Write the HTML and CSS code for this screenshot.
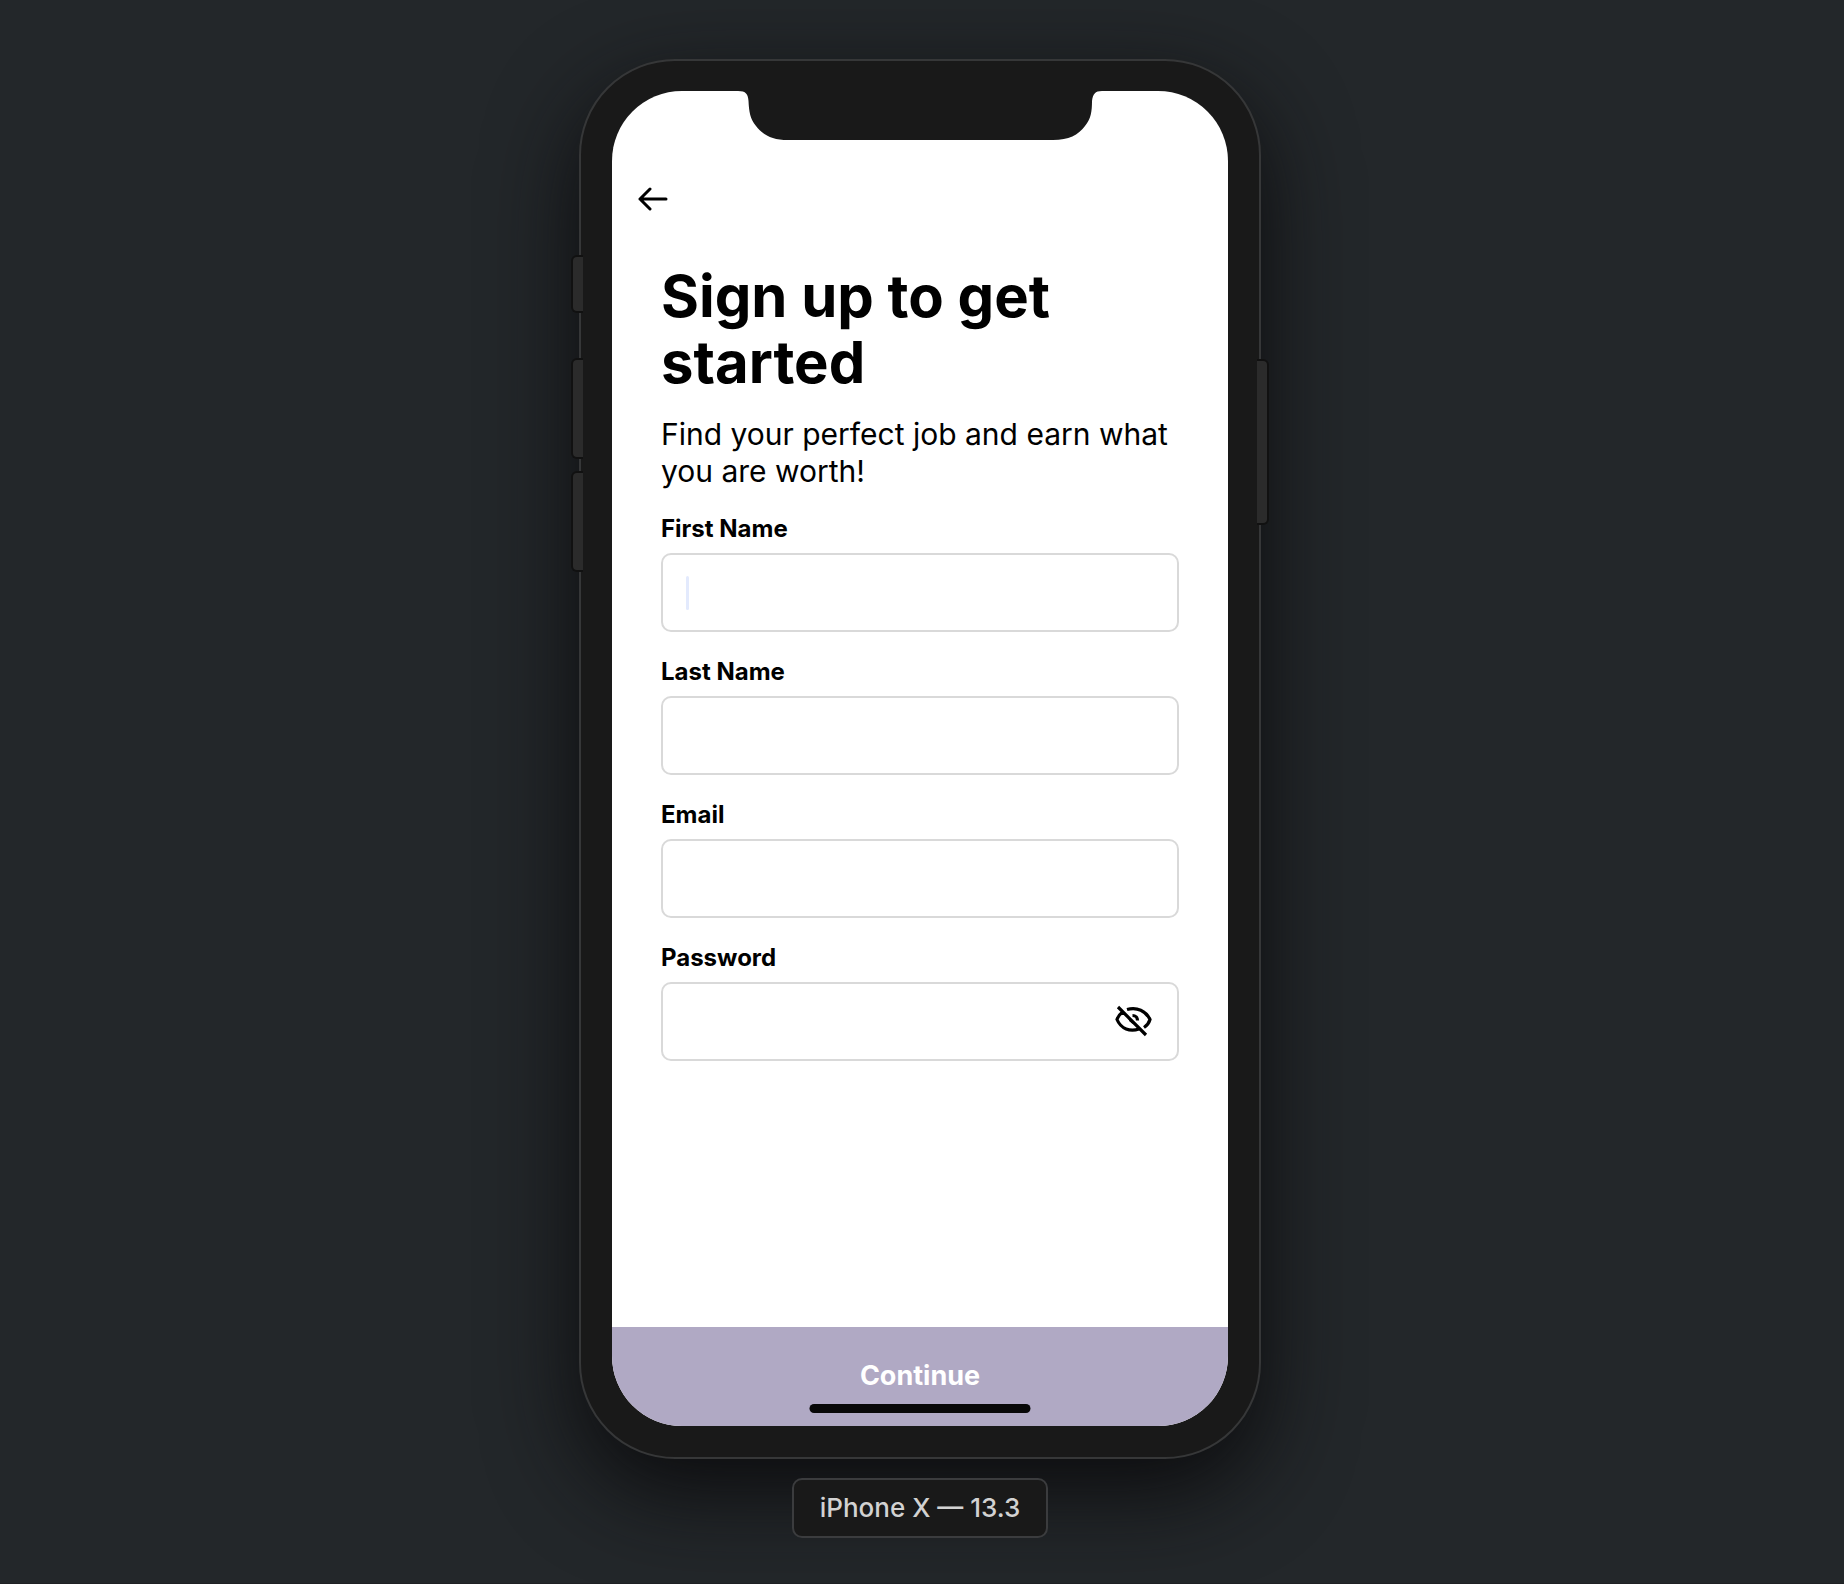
FILE: index.html
```html
<!DOCTYPE html>
<html lang="en">
<head>
<meta charset="utf-8">
<title>Sign up</title>
<meta name="viewport" content="width=device-width, initial-scale=1">
<link rel="stylesheet" href="styles.css">
</head>
<body>
<main class="stage">
  <div class="phone">
    <span class="key key-mute"></span>
    <span class="key key-up"></span>
    <span class="key key-down"></span>
    <span class="key key-power"></span>
    <form class="screen">
      <svg class="notch" viewBox="0 0 364 49" aria-hidden="true"><path d="M0 0C8 0 10 3 10.500 10C11 20 12 28 18 35C25 44 34 49 50 49H315C331 49 340 44 347 35C353 28 354 20 354 10C355 3 357 0 364 0Z"/></svg>
      <header class="bar">
        <button class="icon-button" type="button" aria-label="Back">
          <svg width="30" height="24" viewBox="0 0 30 24" fill="none" stroke="#000" stroke-width="3" stroke-linecap="round" stroke-linejoin="round"><path d="M28 12H2M12 2L2 12L12 22"/></svg>
        </button>
      </header>
      <div class="content">
        <h1 class="title">Sign up to get<br>started</h1>
        <p class="lead">Find your perfect job and earn what you are worth!</p>
        <div class="field">
          <label class="label" for="first">First Name</label>
          <div class="control"><span class="caret"></span><input class="input" id="first" type="text"></div>
        </div>
        <div class="field">
          <label class="label" for="last">Last Name</label>
          <div class="control"><input class="input" id="last" type="text"></div>
        </div>
        <div class="field">
          <label class="label" for="email">Email</label>
          <div class="control"><input class="input" id="email" type="email"></div>
        </div>
        <div class="field">
          <label class="label" for="password">Password</label>
          <div class="control"><input class="input" id="password" type="password">
            <button class="icon-button" type="button" aria-label="Show password">
              <svg width="38" height="34" viewBox="0 0 38 34" fill="none" stroke="#000" stroke-width="3.200"><path d="M3 2L31 30M12 4.500C22 1.500 31 6 35 14.500C34 18 32 20.500 29 22.500M7 7.500C4.500 9.500 2.800 12 2 14.500C6 24 15 27 24 24"/><path d="M17.500 10.500C20.500 10.500 22.500 12.500 22.500 15.500"/><path d="M14 13C14 16.500 16.500 18.500 20 18.500Z" fill="#000" stroke-width="1"/></svg>
            </button>
          </div>
        </div>
      </div>
      <button class="continue" type="submit">Continue</button>
      <span class="home"></span>
    </form>
  </div>
  <p class="badge">iPhone X — 13.3</p>
</main>
</body>
</html>
```
FILE: styles.css
```css
* {
  box-sizing: border-box;
}

body {
  margin: 0;
  background: #23272a;
  color: #000;
  font-family: Inter, sans-serif;
}

.stage {
  display: flex;
  flex-direction: column;
  align-items: center;
  gap: 19px;
  min-height: 100vh;
  padding: 59px 4px 0 0;
  border-bottom: 1px solid #1f2124;
}

.phone {
  position: relative;
  display: flex;
  width: 100%;
  max-width: 682px;
  min-height: 1400px;
  padding: 30px 31px 31px;
  border: 2px solid #363738;
  border-radius: 96px;
  background: #191919;
  box-shadow: 0 32px 90px #0c0c0e;
}

.key {
  position: absolute;
  left: -8px;
  width: 10px;
  border-radius: 4px 0 0 4px;
  background: #2b2b2b;
  box-shadow: 0 0 0 2px #111;
  clip-path: inset(-2px 0 -2px -2px);
}

.key-mute {
  top: 196px;
  height: 54px;
}

.key-up {
  top: 299px;
  height: 97px;
}

.key-down {
  top: 412px;
  height: 97px;
}

.key-power {
  top: 300px;
  right: -8px;
  left: auto;
  border-radius: 0 4px 4px 0;
  height: 162px;
  clip-path: inset(-2px -2px -2px 0);
}

.screen {
  position: relative;
  display: flex;
  flex: 1;
  flex-direction: column;
  overflow: hidden;
  border-radius: 70px;
  background: #fff;
}

.notch {
  position: absolute;
  top: 0;
  left: 50%;
  width: 364px;
  height: 49px;
  transform: translateX(-50%);
  fill: #191919;
}

.bar {
  display: flex;
  padding: 96px 26px 0;
}

.icon-button {
  display: flex;
  padding: 0;
  border: 0;
  background: none;
}

.content {
  flex: 1;
  padding: 52px 49px 0;
}

.title {
  margin: 0 0 21px;
  font-size: 58px;
  font-weight: 700;
  line-height: 66px;
}

.lead {
  margin: 0 0 24px;
  font-size: 30px;
  line-height: 37px;
}

.field {
  margin-bottom: 25px;
}

.label {
  display: block;
  margin-bottom: 9px;
  font-size: 24px;
  font-weight: 700;
  line-height: 30px;
}

.control {
  display: flex;
  align-items: center;
  height: 79px;
  padding: 0 24px 0 23px;
  border: 2px solid #d9d9d9;
  border-radius: 10px;
}

.caret {
  width: 3px;
  height: 34px;
  border-radius: 2px;
  background: #e3eafd;
}

.input {
  flex: 1;
  min-width: 0;
  height: 100%;
  padding: 0;
  border: 0;
  outline: 0;
  background: none;
  font: inherit;
  font-size: 28px;
}

.continue {
  height: 99px;
  padding: 0 0 2px;
  border: 0;
  background: #b0a9c4;
  color: #fff;
  font: inherit;
  font-size: 27px;
  font-weight: 700;
}

.home {
  position: absolute;
  bottom: 13px;
  left: 50%;
  width: 221px;
  height: 9px;
  border-radius: 5px;
  background: #080808;
  transform: translateX(-50%);
}

.badge {
  position: relative;
  margin: 0;
  padding: 12px 26px;
  border: 2px solid #3b3c3e;
  border-radius: 10px;
  background: #191919;
  color: #d2d2d2;
  font-size: 26px;
  font-weight: 500;
  line-height: 32px;
}
```
